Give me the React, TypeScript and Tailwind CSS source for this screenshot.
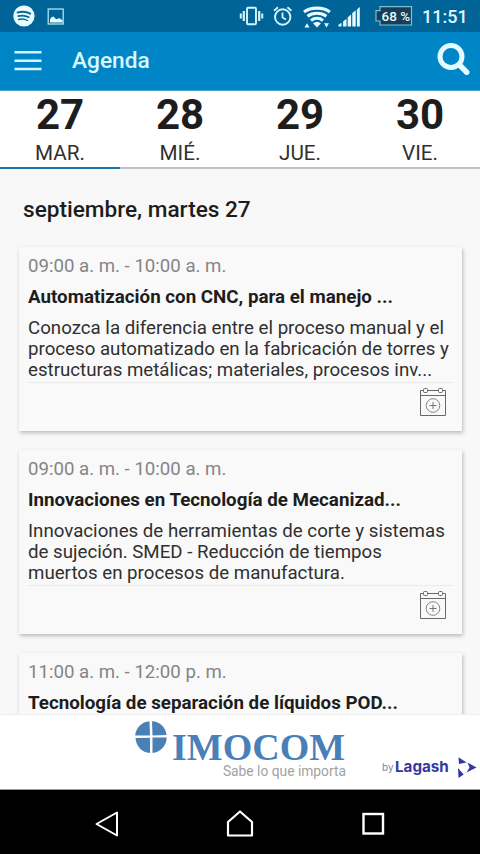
const days = [
  { number: "27", name: "MAR.", active: true },
  { number: "28", name: "MIÉ.", active: false },
  { number: "29", name: "JUE.", active: false },
  { number: "30", name: "VIE.", active: false },
];

const events = [
  {
    time: "09:00 a. m. - 10:00 a. m.",
    title: "Automatización con CNC, para el manejo ...",
    lines: [
      "Conozca la diferencia entre el proceso manual y el",
      "proceso automatizado en la fabricación de torres y",
      "estructuras metálicas; materiales, procesos inv...",
    ],
  },
  {
    time: "09:00 a. m. - 10:00 a. m.",
    title: "Innovaciones en Tecnología de Mecanizad...",
    lines: [
      "Innovaciones de herramientas de corte y sistemas",
      "de sujeción. SMED - Reducción de tiempos",
      "muertos en procesos de manufactura.",
    ],
  },
  {
    time: "11:00 a. m. - 12:00 p. m.",
    title: "Tecnología de separación de líquidos POD...",
    lines: [],
  },
];

function SpotifyIcon() {
  return (
    <svg className="ml-[13px] h-[22px] w-[22px]" viewBox="0 0 22 22" fill="none">
      <circle cx="11" cy="11" r="10.6" fill="#e6fbff" />
      <g stroke="#0b6792" strokeLinecap="round">
        <path d="M4.6 7.5c4.300-1.300 9-.9 12.600 1.100" strokeWidth="2" />
        <path d="M5.200 11.100c3.700-1 7.500-.6 10.700 1.100" strokeWidth="1.700" />
        <path d="M5.700 14.500c3.100-.8 6.100-.5 8.800 1" strokeWidth="1.400" />
      </g>
    </svg>
  );
}

function PictureIcon() {
  return (
    <svg className="ml-[12px] h-[17px] w-[18px]" viewBox="0 0 18 17">
      <rect x="1.200" y="1" width="15" height="15" fill="none" stroke="#a9e3f2" strokeWidth="1.300" />
      <path d="M3 14.500v-3l1.500-2.200 2-.8 2 2.300 1.500.5 2-1.200 3.500 2.200v2.200z" fill="#e6fbff" />
    </svg>
  );
}

function StatusIcons() {
  return (
    <svg className="h-[32px] w-[125px]" viewBox="0 0 125 32" fill="none" stroke="#d4f5fb">
      <rect x="8" y="7.800" width="9" height="16.500" rx="1" strokeWidth="1.900" />
      <path d="M4.800 11v10M20.200 11v10" strokeWidth="2.200" />
      <path d="M1.800 13.500v5M23.200 13.500v5" strokeWidth="2" />
      <circle cx="43.700" cy="17" r="7.700" strokeWidth="1.900" />
      <path d="M43.500 12.500v5l3.500 2M35 10.800l4-3.500M48.400 7.300l4 3.500" strokeWidth="1.800" />
      <g stroke="#e6fbff" strokeWidth="3.100">
        <path d="M65 11.900c7-5 18.900-5 25.900 0" />
        <path d="M68.500 16.200c5.200-4 13.700-4 18.900 0" />
        <path d="M72 20.400c3.600-2.700 8.400-2.700 12 0" />
      </g>
      <g fill="#e6fbff" stroke="none">
        <path d="M74 23.300q4-3 8 0L78 27.500z" />
        <path d="M65.500 27.500l2.500-4.200 2.500 4.200zM85 23.300h5l-2.500 4.200z" />
        <path d="M99.500 26.500v-1.700l3-2v3.700zM104.100 26.500v-5l3.400-2.700v7.700zM108.700 26.500v-9.300l3.400-2.700v12zM113.300 26.500V13l3.400-2.700v16.200z" />
        <path d="M117.900 26.500V9.500l2.900-2.500v19.500z" />
      </g>
    </svg>
  );
}

function Battery() {
  return (
    <div className="relative ml-[11px] h-[20px] w-[38px]">
      <svg className="h-full w-full" viewBox="0 0 38 20">
        <path d="M5 .7h31.500v18.300H5v-4H1v-10.300H5z" fill="#173e56" stroke="#80bed8" strokeWidth="1.200" />
      </svg>
      <span className="absolute top-[3px] left-[6.500px] text-[13.500px] leading-[14px] font-medium whitespace-pre text-[#e6fbff]">68 %</span>
    </div>
  );
}

function CalendarAddIcon() {
  return (
    <svg className="h-[30px] w-[28px]" viewBox="0 0 28 30" fill="none" stroke="#686868" strokeWidth="1">
      <path d="M4 3.500H1.500v25h25v-25H24M9 3.500h10M1.500 8.500h25" />
      <rect x="4.500" y="1.500" width="4" height="4" rx="1" />
      <rect x="19.500" y="1.500" width="4" height="4" rx="1" />
      <circle cx="14" cy="18.500" r="6.800" strokeWidth=".8" />
      <path d="M10.500 18.500h7M14 15v7" strokeWidth=".9" />
    </svg>
  );
}

export default function App() {
  return (
    <div className="flex h-[854px] w-[480px] flex-col overflow-hidden bg-[#f9f9f9] font-['Roboto',sans-serif] text-[#1d1d1d]">
      <div className="flex h-[32px] shrink-0 items-center bg-[#006498]">
        <SpotifyIcon />
        <PictureIcon />
        <div className="ml-auto flex items-center pr-[12px]">
          <StatusIcons />
          <Battery />
          <span className="ml-[9px] w-[46px] pt-[1px] text-[18px] leading-[20px] font-medium whitespace-nowrap text-[#dff8fd]">11:51</span>
        </div>
      </div>

      <header className="flex h-[59px] shrink-0 items-center border-b border-[#4aa6c8] bg-[#0085c7]">
        <svg className="ml-[14px] h-[20px] w-[28px]" viewBox="0 0 28 20" stroke="#d4f8ff" strokeWidth="2.500">
          <path d="M.5 1.300h27M.5 9.700h27M.5 18h27" />
        </svg>
        <h1 className="ml-[30px] text-[22.700px] leading-[28px] font-medium text-[#d8f8ff]">Agenda</h1>
        <svg className="mr-[10px] mb-[4px] ml-auto h-[34px] w-[34px]" viewBox="0 0 34 34" fill="none" stroke="#e4fbff">
          <circle cx="15" cy="14.500" r="11" strokeWidth="5" />
          <path d="M23.500 23l7.200 7.200" strokeWidth="5.500" strokeLinecap="round" />
        </svg>
      </header>

      <nav className="grid h-[78px] shrink-0 grid-cols-4 bg-white text-center">
        {days.map((day) => (
          <div
            key={day.number}
            className={`flex flex-col border-b-2 ${day.active ? "border-[#1d76ab]" : "border-[#c1c1c1]"}`}
          >
            <span className="text-[42px] leading-[48px] font-bold">{day.number}</span>
            <span className="text-[20.700px] leading-[28px] text-[#303030]">{day.name}</span>
          </div>
        ))}
      </nav>

      <main className="flex min-h-0 grow flex-col overflow-hidden bg-[#f8f8f8]">
        <h2 className="mt-[27px] ml-[23px] text-[22.600px] leading-[28px] font-medium whitespace-nowrap">septiembre, martes 27</h2>
        <div className="mt-[23px] ml-[19px] flex w-[443px] flex-col gap-[19px]">
          {events.map((event) => (
            <article
              key={event.title}
              className="flex h-[184px] shrink-0 flex-col bg-[#f9f9f9] px-[9px] pt-[7px] shadow-[1px_2px_4px_rgba(0,0,0,0.25)]"
            >
              <p className="text-[18.650px] leading-[24px] text-[#858585]">{event.time}</p>
              <h3 className="mt-[7px] text-[18.750px] leading-[24px] font-bold whitespace-nowrap">{event.title}</h3>
              <div className="mt-[8px] h-[66px] border-b border-dotted border-[#dedede] pt-[1px] text-[18.700px] leading-[21px] whitespace-nowrap text-[#303030]">
                {event.lines.map((line) => (
                  <p key={line}>{line}</p>
                ))}
              </div>
              <div className="mt-[4px] mr-[6px] flex justify-end">
                <CalendarAddIcon />
              </div>
            </article>
          ))}
        </div>
      </main>

      <footer className="flex h-[76px] shrink-0 border-t border-b border-t-[#eeeeee] border-b-[#9b9b9b] bg-white">
        <svg className="mt-[5px] ml-[134px] h-[34px] w-[34px]" viewBox="0 0 34 34" fill="#4980b7">
          <path d="M16 15.500H1.200C1.700 8 8 1.500 15.500 1.200zM18 1.200C26 1.500 32 7.500 32.500 15L18.500 15.500zM1.500 18L16 17.700v15.300C8 32.500 2 26.500 1.500 18zM18.500 17.500h14.300C32.500 26 26 32.500 18.500 33z" />
        </svg>
        <div className="ml-[4px] flex w-[174px] flex-col pt-[17px]">
          <span className="font-['Liberation_Serif',serif] text-[38px] leading-[30px] font-bold text-[#4980b7]">IMOCOM</span>
          <span className="mt-[1px] text-right text-[13.800px] leading-[17px] whitespace-nowrap text-[#a2a2a2]">Sabe lo que importa</span>
        </div>
        <div className="mt-[42px] ml-[36px] flex h-[20px] items-center font-['Inter',sans-serif]">
          <span className="w-[11px] text-[10px] leading-[20px] text-[#8585a5]">by</span>
          <span className="ml-[2px] w-[54px] text-[15.200px] leading-[20px] font-bold text-[#3338a0]">Lagash</span>
          <svg className="ml-[8px] h-[21px] w-[20px]" viewBox="0 0 20 21" fill="#3338a0">
            <path d="M1.500.3L9.500 5.500 2 7zM10.500 5.500L19.500 10.500 9.500 15.500l3-5zM1 11l5.700 6.500L1.500 21z" />
          </svg>
        </div>
      </footer>

      <div className="flex h-[64px] shrink-0 items-center bg-black pt-[4px]">
        <svg className="ml-[94px] h-[28px] w-[26px]" viewBox="0 0 26 28" fill="none" stroke="white" strokeWidth="2" strokeLinejoin="round">
          <path d="M2.500 14L23 2.500v23z" />
        </svg>
        <svg className="ml-[106px] h-[28px] w-[28px]" viewBox="0 0 28 28" fill="none" stroke="white" strokeWidth="2.200" strokeLinejoin="round">
          <path d="M2 12L14 1.500 26 12v13.500H2z" />
        </svg>
        <svg className="ml-[107px] h-[24px] w-[24px]" viewBox="0 0 24 24" fill="none" stroke="white" strokeWidth="2.400">
          <rect x="2.500" y="2" width="19.500" height="19.500" />
        </svg>
      </div>
    </div>
  );
}
